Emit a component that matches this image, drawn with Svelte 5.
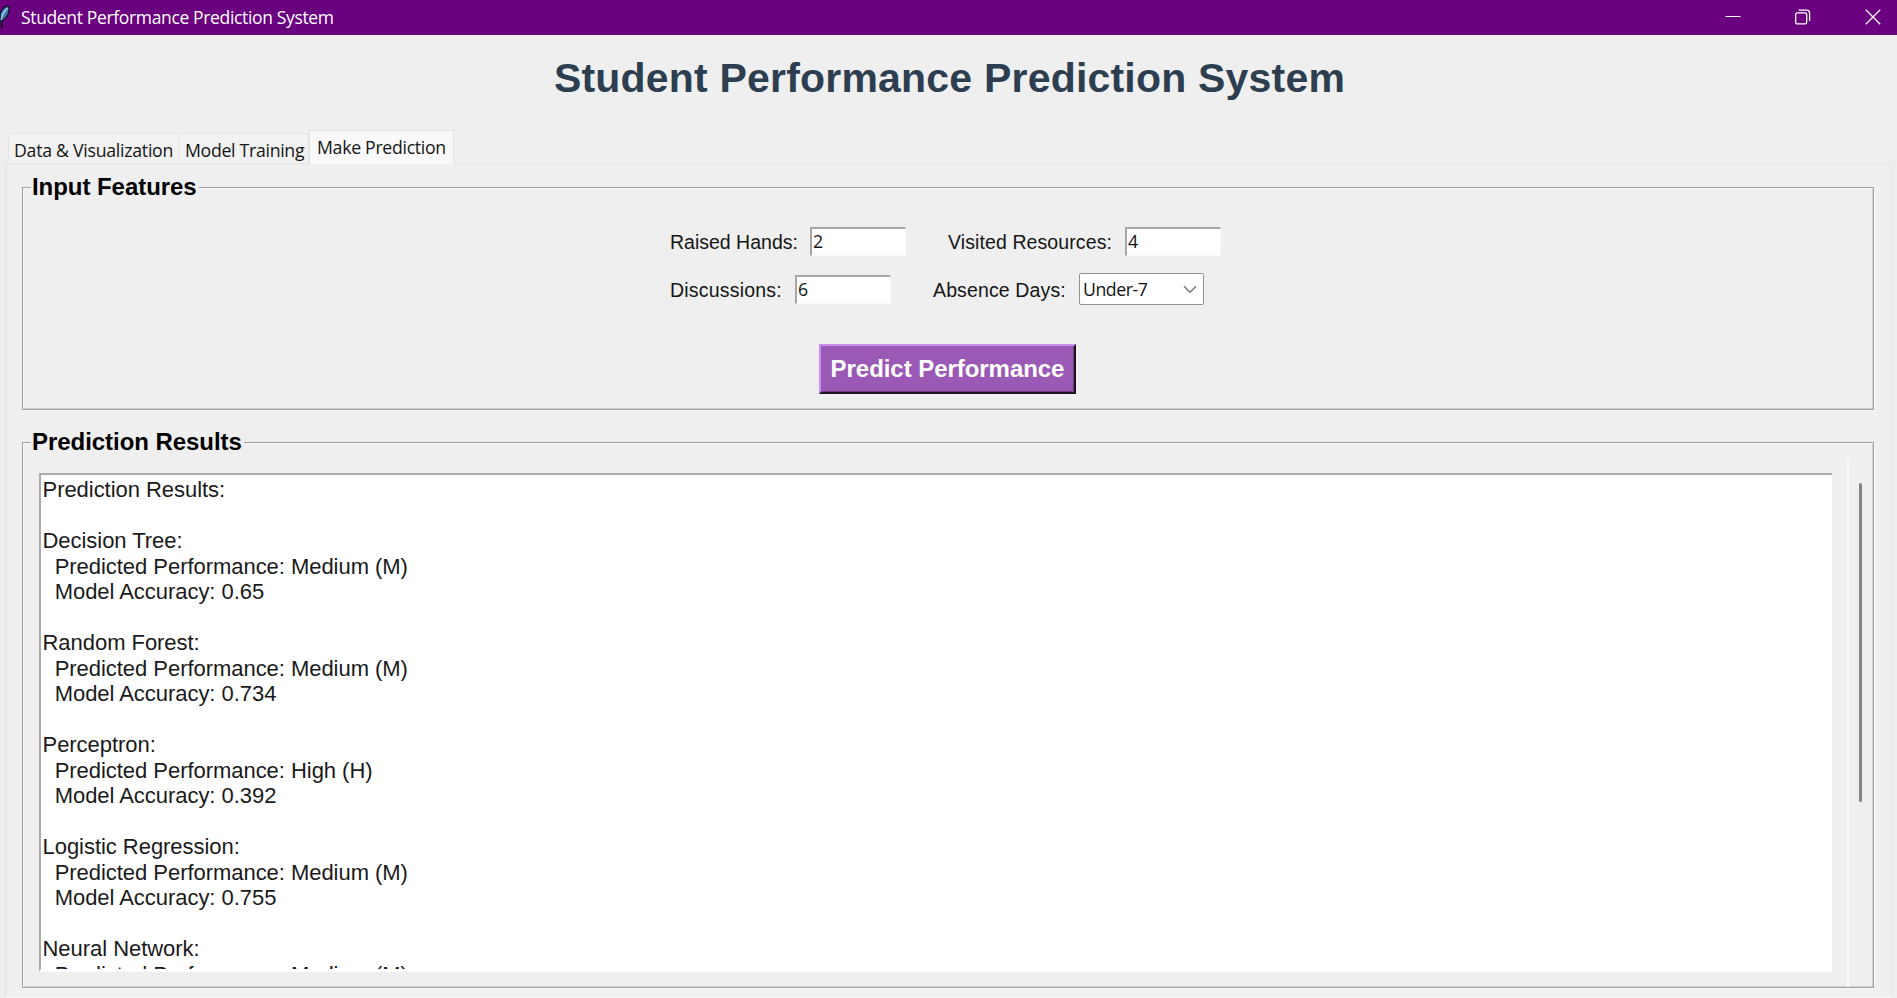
<script>
  const tabs = [
    { label: 'Data & Visualization', cls: 'data' },
    { label: 'Model Training', cls: 'training' },
    { label: 'Make Prediction', cls: 'active' }
  ];

  const models = [
    { name: 'Decision Tree', performance: 'Medium (M)', accuracy: '0.65' },
    { name: 'Random Forest', performance: 'Medium (M)', accuracy: '0.734' },
    { name: 'Perceptron', performance: 'High (H)', accuracy: '0.392' },
    { name: 'Logistic Regression', performance: 'Medium (M)', accuracy: '0.755' },
    { name: 'Neural Network', performance: 'Medium (M)', accuracy: '' }
  ];

  const results =
    'Prediction Results:\n\n' +
    models
      .map((m) =>
        `${m.name}:\n  Predicted Performance: ${m.performance}` +
        (m.accuracy ? `\n  Model Accuracy: ${m.accuracy}` : '')
      )
      .join('\n\n');
</script>

<div class="window">
  <header class="titlebar">
    <svg class="feather" width="11" height="30" viewBox="0 0 11 30">
      <path d="M1.6 28 L2 20 L4 15" stroke="#120b18" stroke-width="1.8" fill="none" />
      <path d="M0 14 C1.5 9.5 4.5 6.5 8.8 6 C9.6 10 8.4 15 5 18.5 L2 21 L0 21.5 Z" fill="#4a8ac8" stroke="#101c2c" stroke-width="1.5" />
      <path d="M1.2 20 C2.5 15 4.5 11 7.4 8.4" stroke="#a4cbec" stroke-width="1.6" fill="none" />
      <path d="M2.2 19.5 C4 16 5.5 13 7.4 10" stroke="#1c3f68" stroke-width=".7" fill="none" />
    </svg>
    <span class="caption">Student Performance Prediction System</span>
    <div class="controls">
      <svg width="16" height="16" viewBox="0 0 16 16"><path d="M.5 7.5H15.5" stroke-width="1" /></svg>
      <svg width="16" height="16" viewBox="0 0 16 16">
        <rect x=".7" y="3.9" width="11" height="11" rx="1.6" />
        <path d="M3.6 1.1H11.5Q14.6 1.1 14.6 4.2V12" />
      </svg>
      <svg width="16" height="16" viewBox="0 0 16 16"><path d="M.8 .8L15.2 15.2M15.2 .8L.8 15.2" /></svg>
    </div>
  </header>

  <h1>Student Performance Prediction System</h1>

  <nav>
    {#each tabs as tab}
      <div class="tab {tab.cls}"><span>{tab.label}</span></div>
    {/each}
  </nav>

  <main>
    <section class="group features">
      <h2 class="in">Input Features</h2>
      <div class="form">
        <div class="row">
          <span class="label raised">Raised Hands:</span>
          <div class="entry">2</div>
          <span class="label visited">Visited Resources:</span>
          <div class="entry">4</div>
        </div>
        <div class="row">
          <span class="label discuss">Discussions:</span>
          <div class="entry">6</div>
          <span class="label absence">Absence Days:</span>
          <div class="combo">
            <span>Under-7</span>
            <svg width="14" height="9" viewBox="0 0 14 9"><path d="M1 1.2L7 7.2L13 1.2" /></svg>
          </div>
        </div>
      </div>
      <button><span>Predict Performance</span></button>
    </section>

    <section class="group results">
      <h2 class="out">Prediction Results</h2>
      <div class="body">
        <div class="text"><pre>{results}</pre></div>
        <div class="scroll"><div class="thumb"></div></div>
      </div>
    </section>
  </main>
</div>

<style>
  :global(body) { background: #efefef; overflow: hidden; }
  * { box-sizing: border-box; }
  .window {
    height: 998px;
    display: flex;
    flex-direction: column;
    overflow: hidden;
    background: #efefef;
    font-family: "Liberation Sans", Arial, sans-serif;
  }
  .titlebar {
    height: 35px;
    flex: none;
    display: flex;
    align-items: center;
    background: #6a0080;
    color: #fff;
  }
  .feather { margin: -5px 10px 0 0; }
  .caption {
    font: 17.5px/35px "Open Sans", "Noto Sans", sans-serif;
    letter-spacing: -0.35px;
    white-space: nowrap;
  }
  .controls { margin: -2px 0 0 auto; display: flex; gap: 54px; padding-right: 16px; }
  .controls svg { fill: none; stroke: #fff; stroke-width: 1.3; }
  h1 {
    margin: 0;
    height: 95px;
    flex: none;
    padding: 19px 0 0 2px;
    text-align: center;
    font-size: 41px;
    line-height: 48px;
    letter-spacing: 0.2px;
    color: #2c3e50;
    white-space: nowrap;
  }
  nav {
    display: flex;
    align-items: flex-end;
    height: 33px;
    flex: none;
    padding-left: 8px;
  }
  .tab {
    height: 30px;
    border: 1px solid #e4e4e4;
    border-bottom: 0;
    background: #f2f2f2;
    font: 17.7px/32px "Open Sans", "Noto Sans", sans-serif;
    color: #151515;
    white-space: nowrap;
    padding-left: 5px;
    letter-spacing: -0.3px;
  }
  .data { width: 171px; letter-spacing: -0.26px; }
  .training { width: 130px; border-left: 0; padding-left: 6px; }
  .active {
    width: 145px;
    height: 34px;
    margin-bottom: -1px;
    padding-left: 7px;
    line-height: 32px;
    background: #f9f9f9;
    z-index: 1;
  }
  main {
    flex: 1;
    margin: 0 5px;
    border: 1px solid #e4e4e4;
    border-bottom-color: #fafafa;
    padding: 23px 17px 0 16px;
    display: flex;
    flex-direction: column;
    gap: 32px;
  }
  .group {
    border: 1px solid #a0a0a0;
    box-shadow: 1px 1px 0 #fafafa, inset 1px 1px 0 #fafafa, inset -1px -1px 0 #d2d2d2;
    flex: none;
  }
  .features { height: 223px; }
  .results { height: 546px; }
  h2 {
    width: max-content;
    height: 28px;
    margin: -15px 0 0 8px;
    padding: 0 2px 0 1px;
    background: #efefef;
    font-size: 24px;
    line-height: 28px;
    letter-spacing: -0.05px;
    color: #000;
    white-space: nowrap;
  }
  .form {
    width: 554px;
    margin: 24px 0 0 647px;
    display: flex;
    flex-direction: column;
    gap: 16px;
  }
  .row { display: flex; align-items: center; height: 32px; }
  .label { height: 32px; font-size: 19.5px; line-height: 34px; color: #151515; white-space: nowrap; }
  .raised { width: 140px; }
  .visited { width: 177px; margin-left: 42px; letter-spacing: 0.1px; }
  .discuss { width: 125px; letter-spacing: 0.2px; }
  .absence { width: 146px; margin-left: 42px; letter-spacing: 0.13px; }
  .entry {
    width: 96px;
    height: 29px;
    padding-left: 1px;
    background: #fff;
    border: 1px solid #fafafa;
    border-top: 2px solid #a6a6a6;
    border-left: 2px solid #a6a6a6;
    font: 17.7px/25px "Open Sans", "Noto Sans", sans-serif;
    color: #111;
  }
  .combo {
    width: 125px;
    height: 32px;
    display: flex;
    align-items: center;
    justify-content: space-between;
    padding: 0 6px 0 3px;
    background: #fff;
    border: 1.5px solid #929292;
    border-radius: 2px;
    font: 17.7px/28px "Open Sans", "Noto Sans", sans-serif;
    letter-spacing: -0.45px;
    color: #111;
  }
  .combo svg { fill: none; stroke: #777; stroke-width: 1.5; }
  button {
    display: block;
    width: 257px;
    height: 50px;
    margin: 39px 0 0 796px;
    padding: 0;
    border: 2px solid #1d1122;
    border-top-color: #c78ff0;
    border-left-color: #c78ff0;
    box-shadow: inset -1px -1px 0 #6b3d7c;
    background: #9b59b6;
    color: #fff;
    font: bold 24px/46px "Liberation Sans", Arial, sans-serif;
    letter-spacing: -0.05px;
    white-space: nowrap;
  }
  button span { display: block; height: 46px; }
  .body { display: flex; }
  .text {
    width: 1793px;
    height: 499px;
    margin: 17px 15px 0 16px;
    padding: 2px 1.5px;
    overflow: hidden;
    background: #fff;
    border-top: 2px solid #ababab;
    border-left: 2px solid #ababab;
    border-bottom: 3px solid #fff;
  }
  pre {
    margin: 0;
    height: 492px;
    overflow: hidden;
    font: 22px/25.5px "Liberation Sans", Arial, sans-serif;
    letter-spacing: -0.04px;
    color: #1a1a1a;
  }
  .scroll { width: 15px; height: 529px; margin-top: 2px; border-left: 2px solid #fafafa; }
  .thumb { width: 3px; height: 319px; margin: 25px 0 0 10px; border-radius: 2px; background: #858585; }
</style>
